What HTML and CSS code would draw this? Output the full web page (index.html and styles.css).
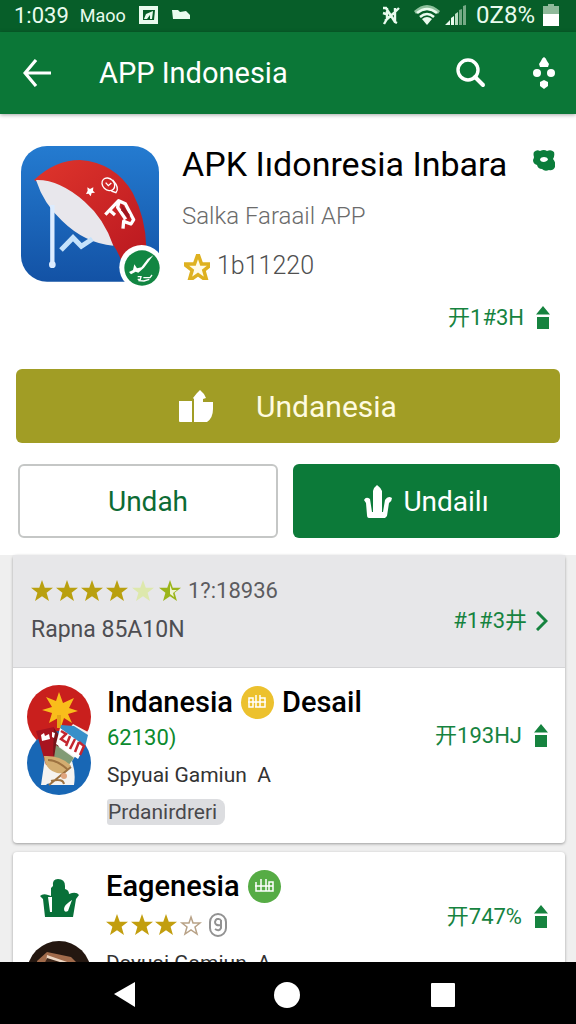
FILE: index.html
```html
<!DOCTYPE html>
<html lang="id">
<head>
<meta charset="utf-8">
<meta name="viewport" content="width=device-width, initial-scale=1">
<title>APP Indonesia</title>
<link rel="stylesheet" href="styles.css">
</head>
<body>
<svg class="defs" aria-hidden="true">
  <symbol id="star" viewBox="0 0 24 24"><path d="M12 0l3 8.500h9l-7 5.500 2.600 9L12 17.600 4.400 23 7 14 0 8.500h9z"/></symbol>
  <symbol id="house" viewBox="0 0 14 24"><path d="M7 0l7 8.500H0zM1 11h12v12H1z"/></symbol>
</svg>
<div class="status">
  <span class="time">1:039</span>
  <span class="carrier">Maoo</span>
  <svg class="s-photo" viewBox="0 0 19 18"><path fill="#e9fbee" d="M0 0h19v18H0z"/><path fill="#075c27" d="M4 4h12l-1 10H4z"/><path fill="#e9fbee" d="M5 13l2-5 7-3-1 8h-2V9l-3 4z"/></svg>
  <svg class="s-bed" viewBox="0 0 18 10"><path fill="#e9fbee" d="M0 0h6l2 2 6-1 4 4v4H1z"/></svg>
  <span class="spacer"></span>
  <svg class="s-mute" viewBox="0 0 18 20"><path fill="none" stroke="#e9fbee" stroke-width="2.400" d="M1 3h3l9 14M5 3v11l-3 5M13 3v14l2 1M17 3l-5 5-9 8M1 8l3 1"/></svg>
  <svg class="s-wifi" viewBox="0 0 26 20"><path fill="#8dc09c" d="M0 6Q13-6 26 6l-2 3Q13-1 2 9z"/><path fill="none" stroke="#e9fbee" stroke-width="2.500" d="M3 8q10-8 20 0M6 12q7-6 14 0"/><path fill="#e9fbee" d="M8 14q5-4 10 0l-5 6z"/></svg>
  <svg class="s-signal" viewBox="0 0 21 20"><path fill="#e9fbee" d="M0 20l5-5v5zM6 13l3-2v9H6z"/><path fill="#b9dcc2" d="M10 9l3-2v13h-3z"/><path fill="#76a986" d="M14 5l3-1v16h-3zM18 1l3-1v20h-3z"/></svg>
  <span class="percent">0Z8%</span>
  <svg class="s-battery" viewBox="0 0 16 22"><path fill="#8fb99a" d="M5 0h6v2h5v9H0V2h5z"/><path fill="#fff" d="M0 10h16v12H0z"/></svg>
</div>
<header class="appbar">
  <button class="icon-btn" aria-label="Kembali"><svg class="i-back" viewBox="0 0 28 28"><path fill="none" stroke="#fff" stroke-width="3.200" d="M13 1L2 14l11 13M2 14h26"/></svg></button>
  <h1 class="appbar-title">APP Indonesia</h1>
  <button class="icon-btn" aria-label="Cari"><svg class="i-search" viewBox="0 0 30 30"><circle cx="12" cy="12" r="10" fill="none" stroke="#fff" stroke-width="3.400"/><path stroke="#fff" stroke-width="4" stroke-linecap="round" d="M19 19l8 8"/></svg></button>
  <button class="icon-btn" aria-label="Menu"><svg class="i-menu" viewBox="0 0 22 32"><path fill="#fff" d="M11 0q2 1 3 4l2 3-1 3H7L6 7l2-3q1-3 3-4z"/><circle cx="4" cy="16" r="4" fill="#fff"/><circle cx="18" cy="16" r="4" fill="#fff"/><path fill="#fff" d="M11 23l4 2v4l-4 3-4-3v-4z"/></svg></button>
</header>
<main class="content">
  <section class="hero">
    <div class="app">
      <svg class="app-icon" viewBox="63 48 417 420" role="img" aria-label="Ikon aplikasi">
        <defs>
          <linearGradient id="blue" x2="0" y2="1"><stop stop-color="#247bd0"/><stop offset="1" stop-color="#1352a5"/></linearGradient>
          <linearGradient id="red" x2="1" y2="1"><stop stop-color="#df352c"/><stop offset="1" stop-color="#ba1820"/></linearGradient>
        </defs>
        <rect x="63" y="48" width="414" height="407" rx="78" fill="url(#blue)"/>
        <path fill="url(#red)" d="M102 150Q165 90 240 90q105 8 158 98 39 75 41 165l-75 40q-10-28-24-47L180 190z"/>
        <path fill="#e8e7ec" d="M108 150q70-2 146 65 58 50 86 132-86-8-154-75-55-50-78-122z"/>
        <path stroke="#dcecff" stroke-width="13" d="M157 225v175"/><circle cx="157" cy="404" r="10" fill="#dcecff"/>
        <path fill="none" stroke="#c5e2fb" stroke-width="15" d="M183 360l36-37 25 26 33-22"/>
        <path fill="none" stroke="#fff" stroke-width="10" stroke-linejoin="round" d="M316 254l40-42 20 9 25 48-8 13-22-8-2 22M329 241l16 14M357 214l-4 18 24 36"/>
        <path fill="#9e1720" d="M365 222l24 32-3 13-22-26z"/>
        <ellipse cx="325" cy="163" rx="21" ry="17" transform="rotate(45 325 163)" fill="none" stroke="#fff" stroke-width="4"/>
        <path fill="none" stroke="#fff" stroke-width="4" d="M317 158l8 9 9-8M338 150q22 24 10 38l-14-5"/>
        <path fill="#fff" d="M262 172l8 5 10-5-1 10 6 6-10 1-3 10-6-8-8 1 5-10z"/>
        <circle cx="425" cy="412" r="67" fill="#fff"/><circle cx="426" cy="414" r="53" fill="#128642"/>
        <path fill="#fff" d="M460 376l-28 37-17 15-8-3-14 8-6-7 12-6 4-17 8 12 13-3 19-25z"/>
        <path fill="none" stroke="#fff" stroke-width="4" d="M413 440h10l-2 8h-8M430 443h20l6-8M448 448l-16 5-17-1"/>
      </svg>
      <div class="app-info">
        <h2 class="app-title">APK Iıdonresia Inbara</h2>
        <p class="app-dev">Salka Faraail APP</p>
        <p class="app-rate"><svg class="gold-star" viewBox="-2 -2 28 28"><use href="#star"/></svg>1b11220</p>
      </div>
      <svg class="flower" viewBox="0 0 22 21"><path fill="#0b7d3b" fill-rule="evenodd" d="M1 2q3-3 6-1 4-2 7 0 4-2 7 1 1 4-1 7 3 3 2 8-2 4-6 3-4 2-7-1-4 0-5-4-4-1-4-5 1-2 1-3-1-3 0-5zM7 9q0 3 4 3 4-1 4-3-1-2-4-2-3 0-4 2z"/></svg>
    </div>
    <a class="price hero-price" href="#"><span>开1#3H</span><svg class="house"><use href="#house"/></svg></a>
    <button class="btn btn-olive"><svg class="i-thumb" viewBox="0 0 34 32"><path fill="#fff" d="M0 11h13v21H1q-1 0-1-1zM15 11V9l-1-1 4-5 3-3q4 3 6 8l-3 1v3h10v7q0 9-6 13H15z"/></svg><span>Undanesia</span></button>
    <div class="btn-row">
      <button class="btn btn-outline">Undah</button>
      <button class="btn btn-green"><svg class="i-crown" viewBox="0 0 28 33"><path fill="#fff" d="M0 15q2-4 6-1l2 13h1V6q1-4 4-6 3 2 5 6v21h1l2-12q3-5 7-2 0 3-3 5l-2 13-2 2H5q-2 0-2-3L2 18z"/></svg><span>Undailı</span></button>
    </div>
  </section>
  <section class="list">
    <article class="card">
      <div class="summary">
        <div>
          <p class="score"><svg class="stars" viewBox="0 0 150 24"><g fill="#b9a00f"><use href="#star" width="22" height="24"/><use href="#star" x="25" width="22" height="24"/><use href="#star" x="50" width="22" height="24"/><use href="#star" x="75" width="22" height="24"/></g><use href="#star" x="101" width="22" height="24" fill="#dde8ac"/><use href="#star" x="128" width="22" height="24" fill="#9bb51a"/><path fill="#eef3d2" d="M139 6l2 5h5l-4 3 1 4-4-3z"/></svg>1?:18936</p>
          <p class="summary-sub">Rapna 85A10N</p>
        </div>
        <a class="price" href="#"><span>#1#3井</span><svg class="chevron" viewBox="0 0 12 20"><path fill="none" stroke="#16833f" stroke-width="3" d="M1 1l9 9-9 9"/></svg></a>
      </div>
      <div class="item">
        <svg class="item-art" viewBox="0 0 64 112" role="img" aria-label="Indanesia">
          <circle cx="32" cy="32" r="32" fill="#c91f1d"/><circle cx="32" cy="78" r="32" fill="#1867b5"/>
          <path fill="#f9bd1b" d="M32 7l4 11 11-5-5 10 9 3-10 3 4 9-8-5-3 9-3-9-9 5 3-10-10-3 10-3-6-10 10 4z"/><path fill="#e4a516" d="M30 30h4v13h-4z"/>
          <path fill="#f5f3f0" d="M18 73l-4 27h5q2-3 5 0h23q2-12-2-24L56 60l5-13-15-8-3 4z"/>
          <path fill="#378fc9" d="M34 40l13 1 14 9-3 12-26-12z"/>
          <path fill="#a81420" d="M9 46l18-4 5 33-13 5z"/><path fill="#75151a" d="M27 43l5 7-1 26-5-6z"/>
          <path fill="#fff" d="M33 43l25 18-7 13-22-15z"/>
          <path fill="none" stroke="#c32630" stroke-width="2.500" d="M34 46l5 3-5 5 6 4M43 51l-4 10M48 54l-5 10M52 57l-4 10M52 57l5 4-4 9"/>
          <path fill="#819b75" d="M29 60l18 13-6 8-14-8z"/>
          <path fill="#fff" d="M14 50l3-2 1 3 4-2 1 5-8 2zM25 47l3 1-1 5-2-1z"/>
          <path fill="#d3ad70" d="M17 71q17-1 27 10-4 9-14 7-12-3-13-17z"/><path fill="none" stroke="#9d7240" stroke-width="2" d="M21 75q9 0 19 9M22 100l22-18M24 96q12-3 13 3"/>
          <circle cx="37" cy="91" r="3" fill="#dfa47e"/>
        </svg>
        <div class="item-info">
          <h3 class="item-title">Indanesia <span class="dot dot-yellow"><svg viewBox="0 0 20 16"><path d="M2 4h4v9H2zM1 8h18M9 1v12M13 1v12M13 4h5v9H8"/></svg></span> Desail</h3>
          <p class="item-green">62130)</p>
          <p class="item-sub">Spyuai Gamiun&nbsp; A</p>
          <p class="tag">Prdanirdreri</p>
        </div>
        <a class="price" href="#"><span>开193HJ</span><svg class="house"><use href="#house"/></svg></a>
      </div>
    </article>
    <article class="card">
      <div class="item item-next">
        <div class="art-col">
          <svg class="i-plant" viewBox="0 0 39 39"><path fill="#087039" fill-rule="evenodd" d="M0 17q3-3 8-1l3 1V9l2-2q-1-7 5-7 7 0 7 7v3q4 1 4 5l3-1q5-1 7 2l-3 4-3 18H5L3 20zM8 18l2 15h2V18zM32 21q-8 5-8 9 0 4 4 2z"/></svg>
          <svg class="i-face" viewBox="0 0 64 64"><circle cx="32" cy="32" r="32" fill="#241710"/><path fill="#a16b4b" d="M10 20l10-9 24 5 12 12-4 30H14z"/><path fill="#eed8c4" d="M20 14l23 8-5 16-20-8z"/><path fill="#3c2518" d="M20 17l16 5-6 8-14-4z"/></svg>
        </div>
        <div class="item-info">
          <h3 class="item-title">Eagenesia <span class="dot dot-green"><svg viewBox="0 0 20 16"><path d="M2 4v9h17V4h-4v9M1 8h18M7 1v12M12 1v12"/></svg></span></h3>
          <p class="next-stars"><svg class="stars4" viewBox="0 0 96 24"><g fill="#c29e0e"><use href="#star" width="22" height="24"/><use href="#star" x="25" width="22" height="24"/><use href="#star" x="49" width="22" height="24"/></g><path fill="none" stroke="#b8a287" stroke-width="1.500" d="M85 4l2 6h7l-5 4 2 7-6-4-6 4 2-7-5-4h7z"/></svg><svg class="coin" viewBox="0 0 18 24"><rect x="1" y="1" width="16" height="22" rx="8" fill="none" stroke="#929292" stroke-width="2"/><path fill="none" stroke="#929292" stroke-width="2" d="M12 7q-5-3-6 2 0 4 6 3M12 7v8q-2 4-6 1M8 6h2"/></svg></p>
          <p class="item-sub">Dayuai Gamiun&nbsp; A</p>
        </div>
        <a class="price" href="#"><span>开747%</span><svg class="house"><use href="#house"/></svg></a>
      </div>
    </article>
  </section>
</main>
<nav class="navbar">
  <button class="icon-btn" aria-label="Kembali"><svg class="n-back" viewBox="0 0 21 25"><path fill="#fff" d="M21 0v25L0 12z"/></svg></button>
  <button class="icon-btn" aria-label="Beranda"><svg class="n-home" viewBox="0 0 26 26"><circle cx="13" cy="13" r="13" fill="#fff"/></svg></button>
  <button class="icon-btn" aria-label="Terbaru"><svg class="n-recent" viewBox="0 0 24 24"><rect width="24" height="24" rx="1" fill="#fff"/></svg></button>
</nav>
</body>
</html>
```
FILE: styles.css
```css
* { box-sizing: border-box; }
body {
  margin: 0;
  height: 100vh;
  display: flex;
  flex-direction: column;
  overflow: hidden;
  background: #fff;
  font-family: Roboto, "Noto Sans CJK SC", sans-serif;
  color: #000;
}
h1, h2, h3, p { margin: 0; font-weight: 400; }
svg { display: block; flex: none; }
button { font: inherit; cursor: pointer; }
a { text-decoration: none; }
.defs { display: none; }

.status {
  flex: none;
  height: 32px;
  display: flex;
  align-items: center;
  padding: 0 17px 2px 14px;
  background: #075e29;
  color: #e9fbee;
}
.time { font-size: 22px; }
.carrier { font-size: 18px; margin: 0 13px 0 11px; }
.s-photo { width: 19px; height: 18px; }
.s-bed { width: 18px; height: 10px; margin-left: 14px; }
.spacer { flex: 1; }
.s-mute { width: 18px; height: 20px; }
.s-wifi { width: 26px; height: 20px; margin: 0 5px 0 14px; }
.s-signal { width: 21px; height: 20px; }
.percent { font-size: 24px; line-height: 28px; margin: 0 8px 0 10px; }
.s-battery { width: 16px; height: 22px; }

.appbar {
  flex: none;
  height: 82px;
  display: flex;
  align-items: center;
  padding: 0 21px 0 23px;
  background: #0b7737;
  box-shadow: 0 1px 4px rgba(0, 0, 0, .35);
  z-index: 1;
}
.icon-btn { padding: 0; border: 0; background: none; }
.appbar-title { flex: 1; margin-left: 48px; font-size: 29px; color: #fff; }
.i-back { width: 28px; height: 28px; }
.i-search { width: 30px; height: 30px; }
.i-menu { width: 22px; height: 32px; margin-left: 47px; }

.content { flex: 1; min-height: 0; overflow: hidden; }
.hero { padding: 32px 16px 17px; }
.app { display: flex; padding-left: 5px; }
.app-icon { width: 139px; height: 140px; }
.app-info { flex: 1; margin-left: 22px; white-space: nowrap; }
.app-title { font-size: 34px; line-height: 36px; }
.app-dev { margin-top: 20px; font-size: 24px; line-height: 28px; color: #6b6b6b; font-weight: 300; }
.app-rate { display: flex; align-items: center; gap: 7px; margin-top: 22px; font-size: 25px; line-height: 28px; color: #505050; font-weight: 300; }
.gold-star { width: 28px; height: 28px; fill: #fffbe8; stroke: #deb120; stroke-width: 3; }
.flower { width: 22px; height: 21px; margin: 4px 5px 0 0; }

.price { display: flex; align-items: center; gap: 12px; font-size: 22px; line-height: 28px; color: #16833f; white-space: nowrap; }
.house { width: 14px; height: 24px; fill: #16833f; }
.hero-price { justify-content: flex-end; margin: 18px 10px 37px 0; }

.btn {
  display: flex;
  align-items: center;
  justify-content: center;
  height: 74px;
  border: 0;
  border-radius: 6px;
  font-size: 30px;
  color: #fff;
}
.btn-olive { width: 100%; gap: 43px; background: #a19d25; color: #fffbe0; }
.btn-row { display: grid; grid-template-columns: 260fr 267fr; gap: 15px; margin-top: 21px; padding-left: 2px; }
.btn-outline { border: 2px solid #c5c7c6; background: #fff; color: #0c6b34; font-size: 28px; }
.btn-green { gap: 11px; background: #0c7a39; font-size: 28px; }
.i-thumb { width: 34px; height: 32px; }
.i-crown { width: 28px; height: 33px; }

.list { padding: 0 11px 0 13px; background: #efefef; }
.card { margin-bottom: 9px; border-radius: 4px; background: #fff; box-shadow: 0 1px 3px rgba(0, 0, 0, .35); }
.summary {
  display: flex;
  justify-content: space-between;
  height: 113px;
  padding: 21px 17px 0 18px;
  background: #e7e7e9;
  border-bottom: 1px solid #d5d5d7;
  align-items: flex-start;
}
.summary .price { margin-top: 31px; gap: 9px; }
.score { display: flex; align-items: center; gap: 7px; font-size: 22px; line-height: 30px; color: #5c5c5f; }
.stars { width: 150px; height: 24px; }
.summary-sub { margin-top: 9px; font-size: 23px; line-height: 30px; color: #4e4e52; }
.chevron { width: 12px; height: 20px; }
.item { display: flex; align-items: flex-start; padding: 17px 17px 18px 14px; }
.item-art { width: 64px; height: 112px; }
.item-info { flex: 1; margin-left: 16px; white-space: nowrap; }
.item-title { display: flex; align-items: center; gap: 8px; font-size: 29px; line-height: 34px; font-weight: 500; }
.dot { display: grid; place-items: center; width: 33px; height: 33px; border-radius: 50%; }
.dot svg { width: 20px; height: 16px; fill: none; stroke: #fff; stroke-width: 1.5; }
.dot-yellow { background: #ecc12e; }
.dot-green { background: #56ac45; }
.item-green { font-size: 22px; line-height: 38px; color: #0c8a2e; }
.item-sub { font-size: 21px; line-height: 36px; color: #333; }
.tag { display: inline-block; margin-top: 6px; padding: 0 8px 0 1px; border-radius: 3px 8px 8px 3px; background: #dcdde0; font-size: 21px; line-height: 26px; color: #48484c; }
.item .price { margin-top: 37px; }
.item-next .item-info { margin-left: 15px; }
.art-col { width: 64px; display: grid; justify-items: center; gap: 23px; padding-top: 10px; }
.i-plant { width: 39px; height: 39px; }
.i-face { width: 64px; height: 64px; }
.next-stars { display: flex; align-items: center; gap: 7px; height: 44px; }
.item-next .item-sub { line-height: 32px; }
.stars4 { width: 96px; height: 24px; }
.coin { width: 18px; height: 24px; }
.item-next .price { margin-top: 34px; }

.navbar {
  flex: none;
  height: 62px;
  display: flex;
  align-items: center;
  justify-content: space-between;
  padding: 3px 121px 0 114px;
  background: #000;
}
.n-back { width: 21px; height: 25px; margin-right: 8px; }
.n-home { width: 26px; height: 26px; }
.n-recent { width: 24px; height: 24px; }
```
